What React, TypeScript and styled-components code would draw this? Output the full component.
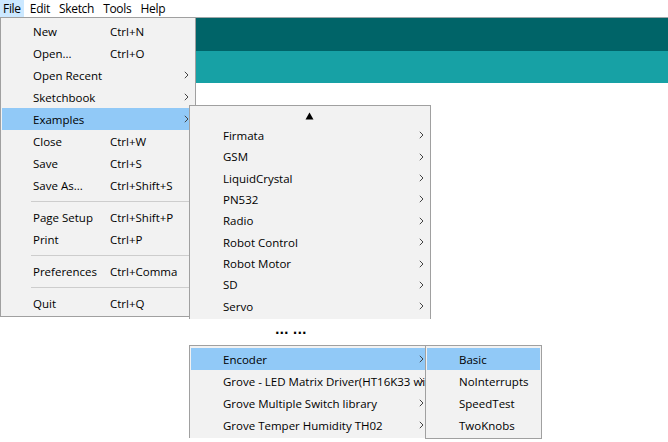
import React from "react";
import styled, { createGlobalStyle } from "styled-components";

const GlobalStyle = createGlobalStyle`
  html, body { margin: 0; padding: 0; background: #ffffff; }
  body { font-family: "Open Sans", "Noto Sans", sans-serif; font-size: 11.5px; color: #000; }
`;

const Window = styled.div`
  position: relative;
  width: 668px;
  height: 442px;
  overflow: hidden;
  background: #ffffff;
`;

const MenuBar = styled.div`
  display: flex;
  height: 17px;
  align-items: center;
  background: #ffffff;
  font-size: 12px;
  letter-spacing: -0.3px;
`;

const BarItem = styled.div<{ $active?: boolean }>`
  height: 17px;
  line-height: 17px;
  padding: 0 3px;
  margin-right: 3px;
  background: ${(p) => (p.$active ? "#cce8ff" : "transparent")};
`;

const Editor = styled.div`
  border-top: 1px solid #9fa7a8;
  display: flex;
  flex-direction: column;
`;

const DarkBand = styled.div`
  height: 33px;
  background: #006468;
`;

const LightBand = styled.div`
  height: 32px;
  background: #17a1a5;
`;

const Menu = styled.div<{ $x: number; $y: number; $w: number; $h?: number; $open?: boolean; $top?: boolean }>`
  position: absolute;
  left: ${(p) => p.$x}px;
  top: ${(p) => p.$y}px;
  width: ${(p) => p.$w}px;
  ${(p) => (p.$h ? `height: ${p.$h}px;` : "")}
  overflow: hidden;
  z-index: ${(p) => (p.$top ? 2 : 1)};
  box-sizing: border-box;
  background: #f2f2f2;
  border: 1px solid #a0a0a0;
  ${(p) => (p.$open ? "border-bottom: none;" : "")}
  padding: 2px 1px;
  display: flex;
  flex-direction: column;
`;

const Row = styled.div<{ $hl?: boolean; $pad: number; $cols: string }>`
  height: 22px;
  display: grid;
  grid-template-columns: ${(p) => p.$cols};
  align-items: center;
  padding-left: ${(p) => p.$pad}px;
  padding-right: 3px;
  background: ${(p) => (p.$hl ? "#91c9f7" : "transparent")};
  white-space: nowrap;
`;

const Label = styled.span`
  overflow: visible;
  min-width: 0;
`;

const Arrow = styled.span`
  display: flex;
  align-items: center;
  justify-content: flex-end;
  padding-right: 2px;
`;

const Separator = styled.div`
  height: 10px;
  display: flex;
  align-items: center;
  padding-left: 29px;
  &::after {
    content: "";
    flex: 1;
    height: 1px;
    background: #cdcdcd;
  }
`;

const ScrollUp = styled.div`
  height: 17px;
  display: flex;
  align-items: center;
  justify-content: center;
  padding-right: 2px;
`;

const Ellipsis = styled.div`
  position: absolute;
  left: 275px;
  top: 323px;
  font-family: "DejaVu Sans", sans-serif;
  font-weight: bold;
  font-size: 12px;
`;

const Chevron = () => (
  <svg width="5" height="8" viewBox="0 0 5 8">
    <polyline points="0.8,0.8 4,4 0.8,7.2" fill="none" stroke="#444" strokeWidth="1" />
  </svg>
);

type Item = { label: string; shortcut?: string; sub?: boolean; hl?: boolean } | "sep";

const fileItems: Item[] = [
  { label: "New", shortcut: "Ctrl+N" },
  { label: "Open...", shortcut: "Ctrl+O" },
  { label: "Open Recent", sub: true },
  { label: "Sketchbook", sub: true },
  { label: "Examples", sub: true, hl: true },
  { label: "Close", shortcut: "Ctrl+W" },
  { label: "Save", shortcut: "Ctrl+S" },
  { label: "Save As...", shortcut: "Ctrl+Shift+S" },
  "sep",
  { label: "Page Setup", shortcut: "Ctrl+Shift+P" },
  { label: "Print", shortcut: "Ctrl+P" },
  "sep",
  { label: "Preferences", shortcut: "Ctrl+Comma" },
  "sep",
  { label: "Quit", shortcut: "Ctrl+Q" },
];

const exampleItems = [
  "Firmata",
  "GSM",
  "LiquidCrystal",
  "PN532",
  "Radio",
  "Robot Control",
  "Robot Motor",
  "SD",
  "Servo",
];

const libItems = [
  "Encoder",
  "Grove - LED Matrix Driver(HT16K33 with 8x8 matrix)",
  "Grove Multiple Switch library",
  "Grove Temper Humidity TH02",
];

const encoderItems = ["Basic", "NoInterrupts", "SpeedTest", "TwoKnobs"];

export default function App() {
  return (
    <>
      <GlobalStyle />
      <Window>
        <MenuBar>
          <BarItem $active>File</BarItem>
          <BarItem>Edit</BarItem>
          <BarItem>Sketch</BarItem>
          <BarItem>Tools</BarItem>
          <BarItem>Help</BarItem>
        </MenuBar>
        <Editor>
          <DarkBand />
          <LightBand />
        </Editor>

        <Menu $x={0} $y={17} $w={196}>
          {fileItems.map((it, i) =>
            it === "sep" ? (
              <Separator key={i} />
            ) : (
              <Row key={i} $hl={it.hl} $pad={31} $cols="77px 1fr 12px">
                <Label>{it.label}</Label>
                <Label>{it.shortcut ?? ""}</Label>
                <Arrow>{it.sub ? <Chevron /> : null}</Arrow>
              </Row>
            )
          )}
        </Menu>

        <Menu $x={189} $y={105} $w={242} $h={214} $open>
          <ScrollUp>
            <svg width="9" height="8" viewBox="0 0 9 8">
              <polygon points="4.5,0.5 8.5,7.5 0.5,7.5" fill="#000" />
            </svg>
          </ScrollUp>
          {exampleItems.map((t) => (
            <Row key={t} $pad={32} $cols="1fr 12px">
              <Label>{t}</Label>
              <Arrow>
                <Chevron />
              </Arrow>
            </Row>
          ))}
        </Menu>

        <Ellipsis>... ...</Ellipsis>

        <Menu $x={189} $y={345} $w={242} $open>
          {libItems.map((t, i) => (
            <Row key={t} $pad={32} $hl={i === 0} $cols="1fr 12px">
              <Label>{t}</Label>
              <Arrow>
                <Chevron />
              </Arrow>
            </Row>
          ))}
        </Menu>

        <Menu $x={425} $y={345} $w={117} $top>
          {encoderItems.map((t, i) => (
            <Row key={t} $pad={32} $hl={i === 0} $cols="1fr">
              <Label>{t}</Label>
            </Row>
          ))}
        </Menu>
      </Window>
    </>
  );
}
